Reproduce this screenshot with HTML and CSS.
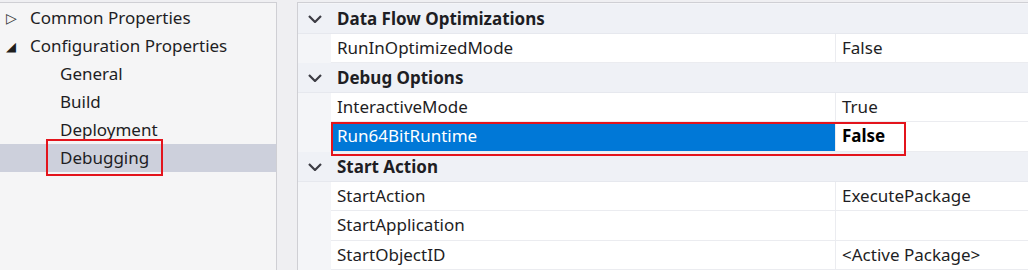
FILE: index.html
```html
<!DOCTYPE html>
<html lang="en">
<head>
    <meta charset="UTF-8">
    <title>Property Pages - Debugging</title>
    <link rel="stylesheet" href="styles.css">
</head>
<body>
    <div class="window">
        <div class="tree">
            <div class="node"><span class="twisty closed">&#9655;</span>Common Properties</div>
            <div class="node"><span class="twisty open">&#9698;</span>Configuration Properties</div>
            <div class="node child">General</div>
            <div class="node child">Build</div>
            <div class="node child">Deployment</div>
            <div class="node child selected"><span class="marked">Debugging</span></div>
        </div>

        <div class="grid">
            <div class="cat"><span class="chev"><svg width="14" height="8" viewBox="0 0 14 8"><polyline points="1,1 7,7 13,1" /></svg></span><span class="cat-name">Data Flow Optimizations</span></div>
            <div class="prop"><span class="gutter"></span><span class="name">RunInOptimizedMode</span><span class="value">False</span></div>

            <div class="cat"><span class="chev"><svg width="14" height="8" viewBox="0 0 14 8"><polyline points="1,1 7,7 13,1" /></svg></span><span class="cat-name">Debug Options</span></div>
            <div class="prop"><span class="gutter"></span><span class="name">InteractiveMode</span><span class="value">True</span></div>
            <div class="prop active"><span class="gutter"></span><span class="name">Run64BitRuntime</span><span class="value">False</span></div>

            <div class="cat"><span class="chev"><svg width="14" height="8" viewBox="0 0 14 8"><polyline points="1,1 7,7 13,1" /></svg></span><span class="cat-name">Start Action</span></div>
            <div class="prop"><span class="gutter"></span><span class="name">StartAction</span><span class="value">ExecutePackage</span></div>
            <div class="prop"><span class="gutter"></span><span class="name">StartApplication</span><span class="value"></span></div>
            <div class="prop"><span class="gutter"></span><span class="name">StartObjectID</span><span class="value">&lt;Active Package&gt;</span></div>
        </div>
    </div>
</body>
</html>
```

FILE: styles.css
```css
* { margin: 0; padding: 0; box-sizing: border-box; }
body { background: #efeff2; font-family: 'Noto Sans', sans-serif; font-size: 17px; color: #1e1e24; }

.window { display: flex; gap: 20px; height: 270px; padding-top: 2px; }

/* left tree */
.tree {
    width: 277px; background: #f5f5f6; border-top: 1px solid #cfcfd4; border-right: 1px solid #cfcfd4;
    padding-top: 1px;
}
.node { height: 28px; line-height: 28px; padding-left: 30px; position: relative; white-space: nowrap; }
.node.child { padding-left: 60px; }
.node.selected { background: #cdd0dc; }
.twisty { position: absolute; left: 6px; top: 0; font-size: 14px; color: #333; }
.twisty.open { font-size: 13px; color: #1e1e1e; }
.marked { outline: 2px solid #e3141c; outline-offset: 0; padding: 5px 12px 5px 12px; margin-left: -12px; }

/* property grid */
.grid { flex: 1; background: #f4f5f8; border-top: 1px solid #cfcfd4; border-left: 1px solid #cfcfd4; padding-top: 1px; }
.cat { display: flex; height: 29.6px; align-items: center; background: #eff1f6; border-bottom: 1px solid #e6e8ee; }
.chev { width: 33px; display: flex; justify-content: center; padding-top: 1px; }
.chev svg polyline { fill: none; stroke: #3c3c44; stroke-width: 2.2; }
.cat-name { font-weight: bold; padding-left: 6px; }

.prop { display: flex; height: 29.6px; line-height: 28.6px; position: relative; }
.gutter { width: 33px; }
.name, .value { background: #fff; border-bottom: 1px solid #ebecf0; white-space: nowrap; }
.name { width: 505px; padding-left: 6px; border-right: 1px solid #ebecf0; }
.value { flex: 1; padding-left: 6px; }

.prop.active .name { background: #0078d7; color: #fff; }
.prop.active .value { font-weight: bold; color: #000; }
.prop.active::after {
    content: ""; position: absolute; left: 33px; top: 0; width: 571px; height: 30px;
    border: 2px solid #e3141c;
}
```
